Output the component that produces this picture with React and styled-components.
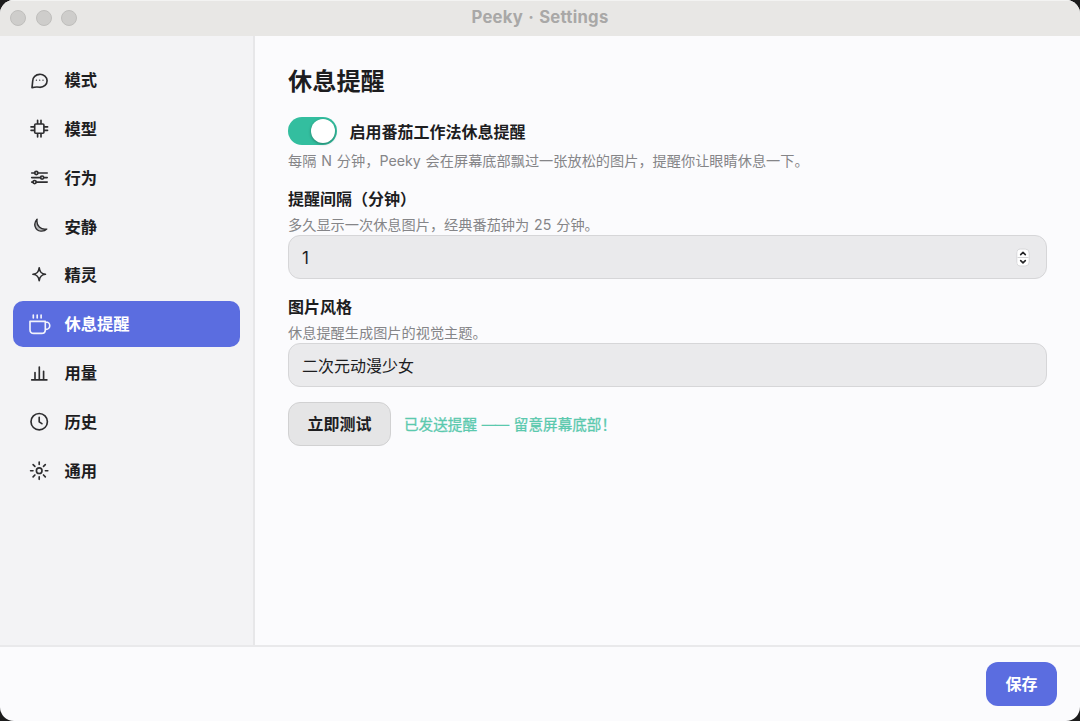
import React from "react";
import styled, { createGlobalStyle } from "styled-components";

const GlobalStyle = createGlobalStyle`
  * { box-sizing: border-box; }
  html, body { margin: 0; height: 100%; background: #1c1c1c; }
  body, button, input { font-family: Inter, "Noto Sans CJK SC", sans-serif; }
`;

const Window = styled.div`
  width: 1080px;
  height: 721px;
  display: flex;
  flex-direction: column;
  overflow: hidden;
  border-radius: 14px;
  background: #fbfbfd;
  color: #1d1d1f;
`;

const TitleBar = styled.header`
  height: 36px;
  flex: none;
  display: grid;
  grid-template-columns: 1fr auto 1fr;
  align-items: center;
  padding: 0 10px;
  background: #e8e7e5;
  box-shadow: inset 0 1px 0 #f3f3f2;
`;

const Lights = styled.div`
  display: flex;
  gap: 9.7px;
`;

const Light = styled.span`
  width: 16px;
  height: 16px;
  border-radius: 50%;
  background: #cecdcb;
  border: 1px solid #bfbebc;
`;

const WindowTitle = styled.div`
  font-size: 16.7px;
  font-weight: 700;
  line-height: 20px;
  color: #a9a8a7;
  letter-spacing: 0.25px;
  word-spacing: 0.9px;
  padding-bottom: 2px;
`;

const Body = styled.div`
  flex: 1;
  display: flex;
  min-height: 0;
`;

const Sidebar = styled.nav`
  width: 255px;
  flex: none;
  display: flex;
  flex-direction: column;
  gap: 3px;
  padding: 21.3px 13px 0;
  background: #f3f3f5;
  border-right: 2px solid #e7e7e9;
`;

const NavItem = styled.a`
  width: 227.4px;
  height: 45.8px;
  flex: none;
  display: flex;
  align-items: center;
  gap: 13px;
  padding-left: 13.5px;
  border-radius: 10px;
  font-size: 16.3px;
  font-weight: 700;
  line-height: 24px;
  color: ${(p) => (p.$active ? "#fff" : "#1d1d1f")};
  background: ${(p) => (p.$active ? "#5b6de0" : "transparent")};
`;

const Icon = styled.svg`
  width: 25px;
  height: 25px;
  flex: none;
  fill: none;
  stroke: currentColor;
  stroke-width: 1.65;
  stroke-linecap: round;
  stroke-linejoin: round;
  opacity: 0.92;
`;

const Content = styled.main`
  flex: 1;
  display: flex;
  flex-direction: column;
  padding: 27px 33.5px 0 33px;
`;

const Heading = styled.h1`
  margin: 0 0 17px;
  font-size: 24.2px;
  line-height: 37px;
  font-weight: 700;
`;

const ToggleRow = styled.label`
  display: flex;
  align-items: center;
  gap: 12.5px;
  height: 28px;
`;

const Switch = styled.span`
  width: 49px;
  height: 28px;
  display: flex;
  justify-content: flex-end;
  padding: 2px;
  border-radius: 14px;
  background: #33be9f;
`;

const Knob = styled.span`
  width: 24px;
  height: 24px;
  border-radius: 50%;
  background: #fff;
  box-shadow: 0 1px 3px rgba(0, 0, 0, 0.35);
`;

const Label = styled.span`
  font-size: 16px;
  line-height: 24px;
  font-weight: 700;
`;

const ToggleLabel = styled(Label)`
  padding-top: 1px;
`;

const Hint = styled.p`
  margin: 0;
  font-size: 14.2px;
  line-height: 20px;
  color: #858588;
  word-spacing: 0.9px;
`;

const ToggleHint = styled(Hint)`
  margin-top: 6px;
`;

const Field = styled.div`
  display: flex;
  flex-direction: column;
  margin-top: 16px;
`;

const FieldHint = styled(Hint)`
  margin-top: 4px;
`;

const Control = styled.div`
  height: 44px;
  display: flex;
  align-items: center;
  justify-content: space-between;
  padding: 1px 16px 0 13px;
  border: 1.5px solid #d6d6d8;
  border-radius: 12px;
  background: #eaeaec;
  font-size: 16px;
  line-height: 24px;
`;

const NumberValue = styled.span`
  font-size: 17px;
  padding-top: 1px;
`;

const Stepper = styled.svg`
  width: 14px;
  height: 20px;
  overflow: visible;
`;

const Actions = styled.div`
  display: flex;
  align-items: center;
  gap: 13px;
  margin-top: 15px;
`;

const Button = styled.button`
  height: 44px;
  width: ${(p) => (p.$primary ? "71px" : "103px")};
  padding: 0;
  border: ${(p) => (p.$primary ? "0" : "1.5px solid #d1d1d2")};
  border-radius: 12px;
  background: ${(p) => (p.$primary ? "#5b6de0" : "#e5e5e6")};
  color: ${(p) => (p.$primary ? "#fff" : "#1d1d1f")};
  font-size: 16px;
  font-weight: 700;
  line-height: 24px;
`;

const Status = styled.span`
  padding-top: 2px;
  font-size: 14.6px;
  line-height: 22px;
  color: #5bc9ae;
  -webkit-text-stroke: 0.3px #5bc9ae;
`;

const Dash = styled.span`
  display: inline-block;
  letter-spacing: -1.5px;
  margin: 0 2px 0 0.5px;
  -webkit-text-stroke: 0;
`;

const Footer = styled.footer`
  height: 76px;
  flex: none;
  display: flex;
  align-items: center;
  justify-content: flex-end;
  padding: 0 23px 1px 0;
  border-top: 2px solid #e9e9eb;
`;

const NAV = [
  ["模式", <><path d="M5.3 19.6L6 13A7.2 6.5 0 1 1 13.2 19.3Q9.6 18.6 5.3 19.6Z" /><path strokeWidth="1.3" d="M9.7 12.1v.1M13 12.1v.1M16.3 12.1v.1" /></>],
  ["模型", <path d="M9 8h7.2q1 0 1 1v7.2q0 1-1 1H9q-1 0-1-1V9q0-1 1-1ZM10.9 8V4.3M14.3 8V4.3M10.9 17.2v3.7M14.3 17.2v3.7M8 10.9H4.3M8 14.3H4.3M17.2 10.9h3.7M17.2 14.3h3.7" />],
  ["行为", <><path d="M5 8H8M11.2 8h9.3M5 12.6h9M17 12.6h3.5M5 17.1h1.3M9.4 17.1h11.1" /><circle cx="9.6" cy="8" r="1.6" /><circle cx="15.4" cy="12.6" r="1.6" /><circle cx="7.9" cy="17.1" r="1.6" /></>],
  ["安静", <path fill="currentColor" fillOpacity="0.3" strokeWidth="1.4" d="M10.4 5.2C6 9.6 8.4 16.6 14 17.1C16.6 17.3 18.7 16.6 20 15.1C14.3 16.2 9.2 11.8 10.4 5.2Z" />],
  ["精灵", <path d="M12.5 4.9C13.1 9.2 14.5 10.7 18.7 11.3C14.5 11.9 13.1 13.4 12.5 17.7C11.9 13.4 10.5 11.9 6.3 11.3C10.5 10.7 11.9 9.2 12.5 4.9Z" />],
  ["休息提醒", <path d="M3.3 9.3h15.3v8.4q0 3.7-3.7 3.7H7q-3.7 0-3.7-3.7ZM18.6 10h.8a3.6 3.6 0 0 1 0 7.3h-.8M6.6 3v3M10.5 3v3M14.4 3v3" />],
  ["用量", <path d="M5 19.9h15.2M8.3 19.9v-7.4M12.6 19.9V7M16.9 19.9V11.3" />],
  ["历史", <><circle cx="12.5" cy="12.7" r="8.2" /><path d="M12.5 8.4v4.4l2.7 1.9" /></>],
  ["通用", <><circle cx="12.5" cy="12.7" r="2.8" /><path d="M12.5 4.1v2.4M12.5 18.9v2.4M3.9 12.7h2.4M18.7 12.7h2.4M6.4 6.6l1.8 1.8M16.8 17l1.8 1.8M6.4 18.8l1.8-1.8M16.8 8.4l1.8-1.8" /></>],
];

export default function App() {
  return (
    <>
      <GlobalStyle />
      <Window lang="zh-CN">
        <TitleBar>
          <Lights><Light /><Light /><Light /></Lights>
          <WindowTitle>Peeky · Settings</WindowTitle>
        </TitleBar>
        <Body>
          <Sidebar>
            {NAV.map(([name, drawing]) => (
              <NavItem key={name} $active={name === "休息提醒"}>
                <Icon viewBox="0.3 0 25 25">{drawing}</Icon>
                {name}
              </NavItem>
            ))}
          </Sidebar>
          <Content>
            <Heading>休息提醒</Heading>
            <ToggleRow>
              <Switch><Knob /></Switch>
              <ToggleLabel>启用番茄工作法休息提醒</ToggleLabel>
            </ToggleRow>
            <ToggleHint>每隔 N 分钟，Peeky 会在屏幕底部飘过一张放松的图片，提醒你让眼睛休息一下。</ToggleHint>
            <Field>
              <Label>提醒间隔（分钟）</Label>
              <FieldHint>多久显示一次休息图片，经典番茄钟为 25 分钟。</FieldHint>
              <Control>
                <NumberValue>1</NumberValue>
                <Stepper viewBox="0 0 14 20">
                  <rect x="0.8" y="1" width="12.4" height="17" rx="4" fill="#fff" stroke="#d8d8da" strokeWidth="1" />
                  <path d="M1.5 9.5h11" stroke="#d4d4d6" />
                  <path d="M4.7 6.6L7 4.4l2.3 2.2M4.7 12.6L7 14.8l2.3-2.2" fill="none" stroke="#252527" strokeWidth="1.6" strokeLinecap="round" strokeLinejoin="round" />
                </Stepper>
              </Control>
            </Field>
            <Field>
              <Label>图片风格</Label>
              <FieldHint>休息提醒生成图片的视觉主题。</FieldHint>
              <Control>二次元动漫少女</Control>
            </Field>
            <Actions>
              <Button>立即测试</Button>
              <Status>已发送提醒 <Dash>——</Dash> 留意屏幕底部！</Status>
            </Actions>
          </Content>
        </Body>
        <Footer><Button $primary>保存</Button></Footer>
      </Window>
    </>
  );
}
